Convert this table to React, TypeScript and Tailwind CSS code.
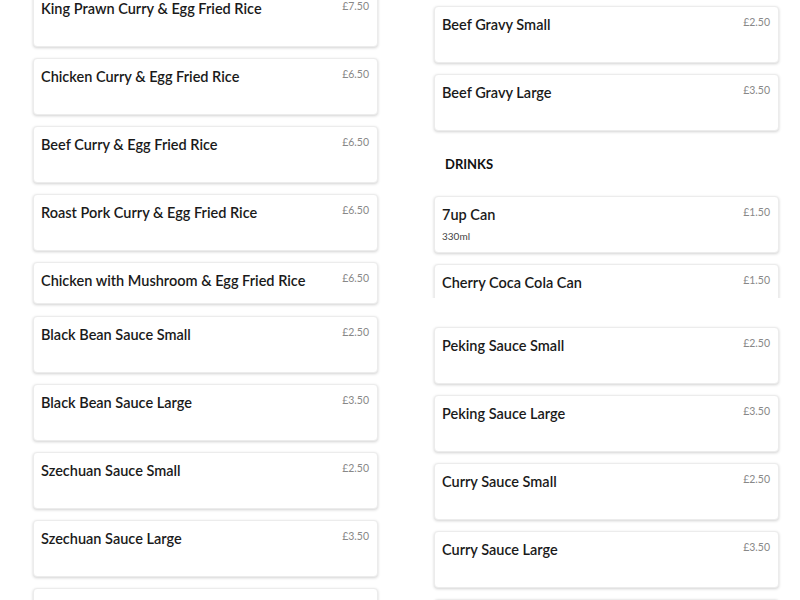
import React from "react";

type Item = { name: string; price: string; note?: string; cut?: "short" | "clip"; gap?: number };

const left: Item[] = [
  { name: "King Prawn Curry & Egg Fried Rice", price: "£7.50" },
  { name: "Chicken Curry & Egg Fried Rice", price: "£6.50" },
  { name: "Beef Curry & Egg Fried Rice", price: "£6.50" },
  { name: "Roast Pork Curry & Egg Fried Rice", price: "£6.50" },
  { name: "Chicken with Mushroom & Egg Fried Rice", price: "£6.50", cut: "short" },
  { name: "Black Bean Sauce Small", price: "£2.50", gap: 12 },
  { name: "Black Bean Sauce Large", price: "£3.50" },
  { name: "Szechuan Sauce Small", price: "£2.50" },
  { name: "Szechuan Sauce Large", price: "£3.50" },
  { name: "Szechuan Sauce Extra Large", price: "£4.50" },
];

const rightTop: Item[] = [
  { name: "Beef Gravy Small", price: "£2.50" },
  { name: "Beef Gravy Large", price: "£3.50" },
];

const drinks: Item[] = [
  { name: "7up Can", price: "£1.50", note: "330ml" },
  { name: "Cherry Coca Cola Can", price: "£1.50", cut: "clip" },
  { name: "Peking Sauce Small", price: "£2.50", gap: 29 },
  { name: "Peking Sauce Large", price: "£3.50" },
  { name: "Curry Sauce Small", price: "£2.50" },
  { name: "Curry Sauce Large", price: "£3.50" },
  { name: "Curry Sauce Extra Large", price: "£4.50" },
];

const Card: React.FC<{ item: Item; first?: boolean }> = ({ item, first }) => {
  const body = (
    <div className="h-[57px] bg-white rounded-[4px] border border-[#ececec] shadow-[0_1px_3px_rgba(0,0,0,0.18)] pl-[7px] pr-2 pt-[8px] flex justify-between">
      <div>
        <p className="text-[14.5px] font-semibold text-[#1a1a1a] leading-5">{item.name}</p>
        {item.note && <p className="text-[10px] text-[#444] mt-[4px]">{item.note}</p>}
      </div>
      <p className="text-[10.5px] text-[#888] leading-4 -mt-[1px]">{item.price}</p>
    </div>
  );
  const mt = first ? "" : item.gap === 12 ? "mt-[12px]" : item.gap === 29 ? "mt-[29px]" : "mt-[11px]";
  if (item.cut === "short") {
    return (
      <div className={`${mt} h-[42px] bg-white rounded-[4px] border border-[#ececec] shadow-[0_1px_3px_rgba(0,0,0,0.18)] pl-[7px] pr-2 pt-[8px] flex justify-between overflow-hidden`}>
        <p className="text-[14.5px] font-semibold text-[#1a1a1a] leading-5">{item.name}</p>
        <p className="text-[10.5px] text-[#888] leading-4 -mt-[1px]">{item.price}</p>
      </div>
    );
  }
  if (item.cut === "clip") {
    return <div className="mt-[10px] h-[35px] overflow-hidden px-[3px] -mx-[3px] pt-[1px]">{body}</div>;
  }
  return <div className={mt}>{body}</div>;
};

export default function App() {
  return (
    <div className="w-[800px] h-[600px] overflow-hidden bg-white font-['Lato','Open_Sans',sans-serif]">
      <div className="grid grid-cols-[345px_345px] gap-x-[56px] pl-[33px]">
        <div className="-mt-[10px] flex flex-col">
          {left.map((it, i) => (
            <Card key={it.name} item={it} first={i === 0} />
          ))}
        </div>
        <div className="mt-[6px] flex flex-col">
          {rightTop.map((it, i) => (
            <Card key={it.name} item={it} first={i === 0} />
          ))}
          <h3 className="mt-[25px] mb-[24px] pl-[11px] text-[13px] font-bold text-[#111] leading-4">DRINKS</h3>
          {drinks.map((it, i) => (
            <Card key={it.name} item={it} first={i === 0} />
          ))}
        </div>
      </div>
    </div>
  );
}
